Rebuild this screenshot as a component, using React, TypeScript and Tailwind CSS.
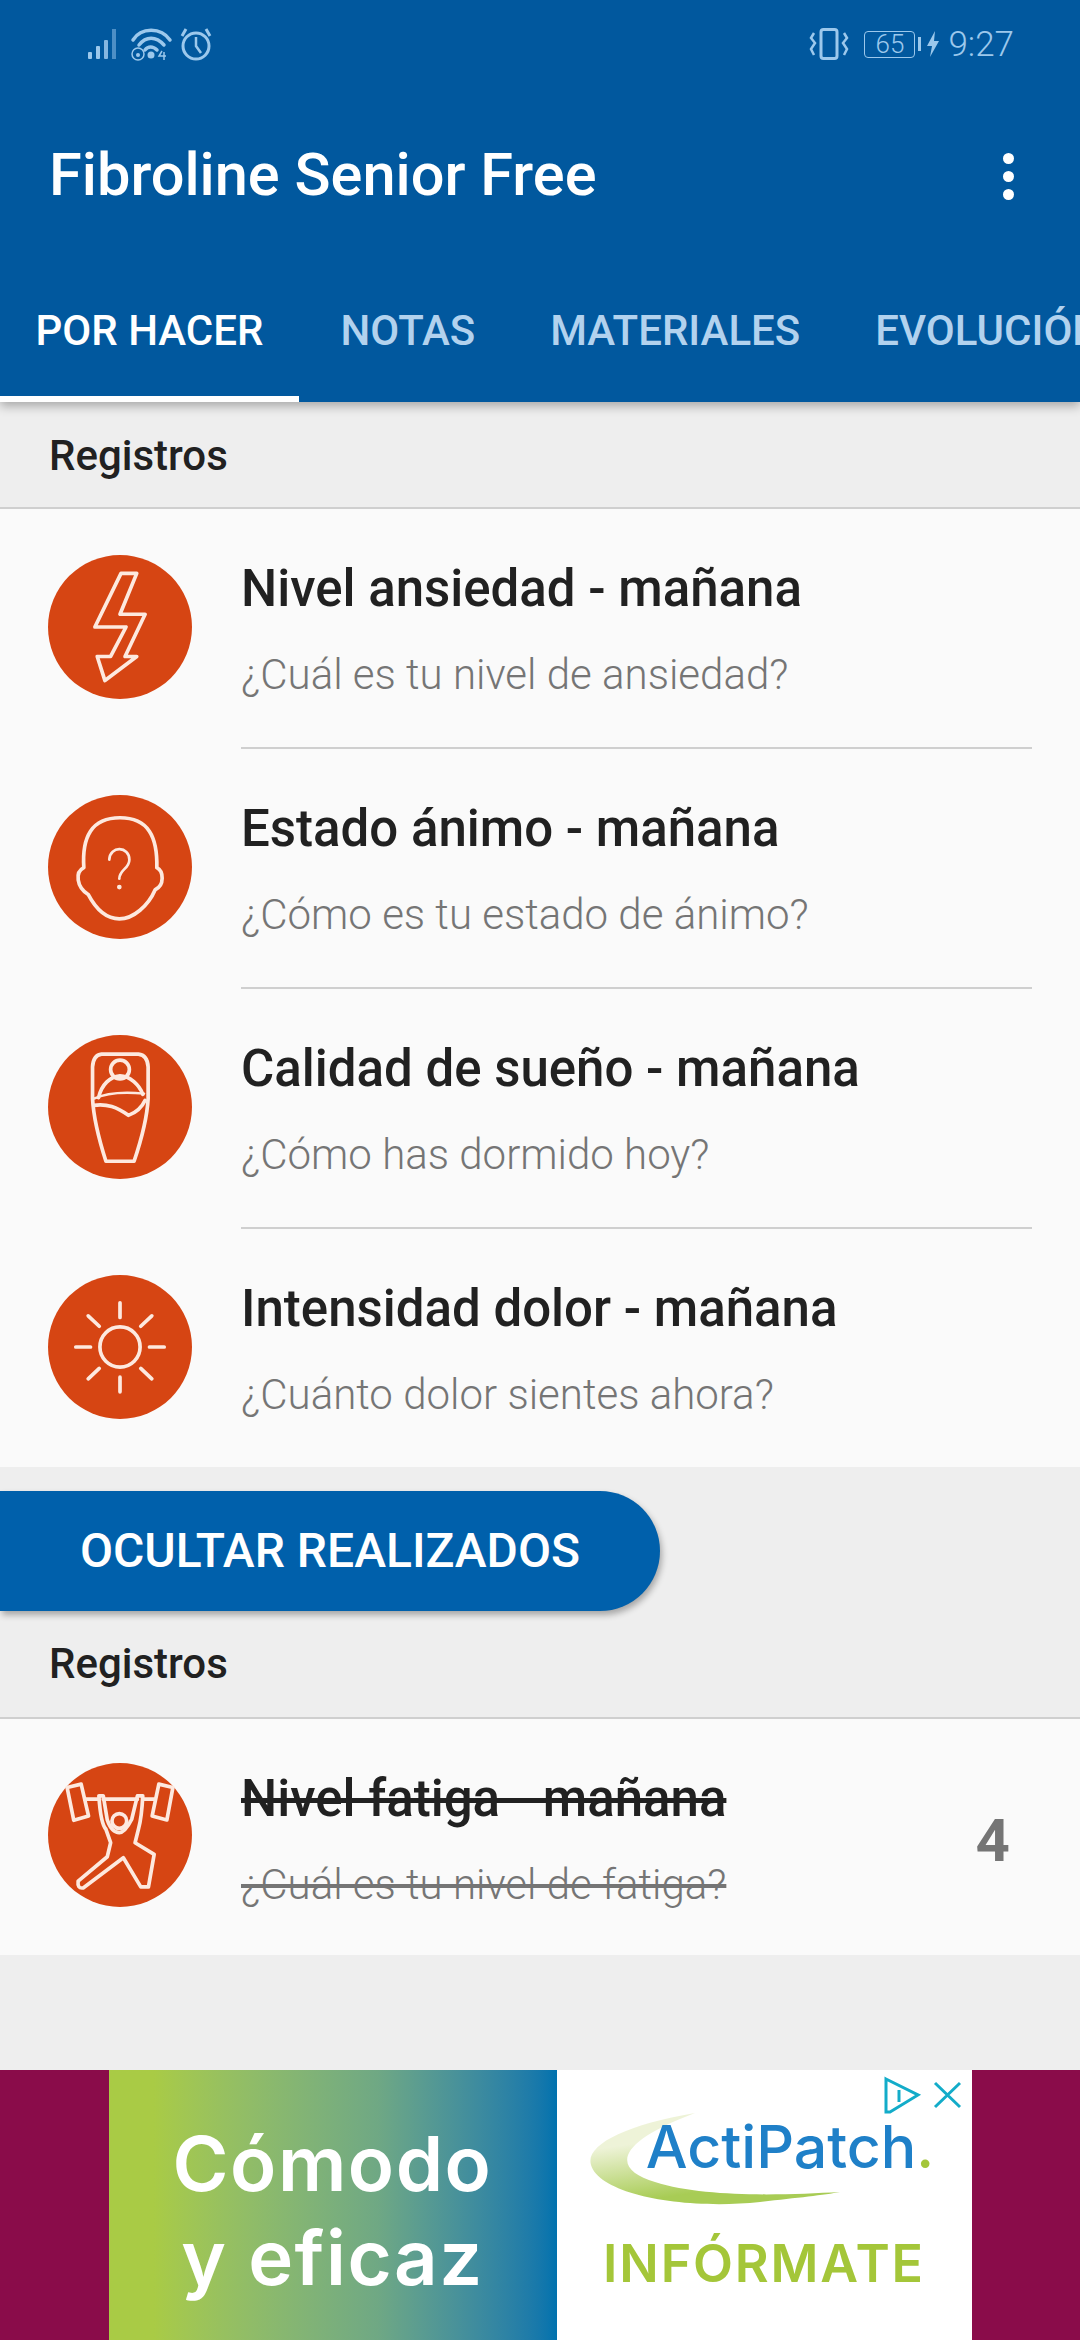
import type { ReactNode } from "react";

const statusColor = "#9cc8ec";

function SignalWifiAlarm() {
  return (
    <svg width="130" height="36" viewBox="0 0 130 36" fill="none" className="ml-[86px]">
      {/* signal bars */}
      <rect x="2" y="26" width="4" height="7" rx="1" fill={statusColor} />
      <rect x="10" y="20" width="4" height="13" rx="1" fill={statusColor} />
      <rect x="18" y="14" width="4" height="19" rx="1" fill={statusColor} opacity="0.85" />
      <rect x="26" y="3" width="4" height="30" fill="#4d8fc6" />
      {/* wifi */}
      <g stroke={statusColor} strokeWidth="3.5" strokeLinecap="round">
        <path d="M47 14 C55 1 75 1 84 14" />
        <path d="M53 19 C60 10 70 10 78 19" />
        <path d="M59 24 C62 20 67 20 71 24" />
      </g>
      <circle cx="52" cy="28" r="6" stroke={statusColor} strokeWidth="1.5" />
      <circle cx="52" cy="29" r="2" fill={statusColor} />
      <circle cx="65" cy="29" r="3.5" fill={statusColor} />
      <path d="M76 25 L73 30 H80 M78 26 V34" stroke={statusColor} strokeWidth="1.5" />
      {/* alarm */}
      <circle cx="110" cy="20" r="13" stroke={statusColor} strokeWidth="3" />
      <path d="M110 11 V20 L115 27" stroke={statusColor} strokeWidth="2.5" />
      <path d="M96 10 L100 3 M124 10 L120 3" stroke={statusColor} strokeWidth="3" />
    </svg>
  );
}

function VibrateIcon() {
  return (
    <svg width="42" height="32" viewBox="0 0 42 32" fill="none" stroke={statusColor}>
      <rect x="13" y="1.5" width="16" height="29" rx="2.5" strokeWidth="3" />
      <path d="M6 5 L3 10 L7 15 L3 21 L6 27" strokeWidth="2.5" />
      <path d="M36 5 L39 10 L35 15 L39 21 L36 27" strokeWidth="2.5" />
    </svg>
  );
}

function StatusBar() {
  return (
    <div className="flex h-[88px] items-center justify-between pr-[66px]">
      <SignalWifiAlarm />
      <div className="flex items-center">
        <VibrateIcon />
        <div className="ml-[14px] flex h-[27px] w-[51px] items-center justify-center rounded-[4px] border border-[#9cc8ec] text-[26px] font-light text-[#9cc8ec]">
          65
        </div>
        <div className="ml-[3px] h-[14px] w-[3px] bg-[#9cc8ec]" />
        <svg width="12" height="26" viewBox="0 0 12 26" className="ml-[6px]" fill={statusColor}>
          <path d="M8 0 L0 15 H5 L3 26 L12 10 H7 Z" />
        </svg>
        <span className="ml-[9px] text-[35px] font-light leading-none text-[#9cc8ec]">9:27</span>
      </div>
    </div>
  );
}

function Header() {
  const tabs = ["NOTAS", "MATERIALES", "EVOLUCIÓN"];
  return (
    <header className="relative z-10 h-[402px] shrink-0 bg-[#01589e] shadow-[0_4px_10px_rgba(0,0,0,0.3)]">
      <StatusBar />
      <div className="flex h-[176px] items-center justify-between pl-[49px] pr-[66px]">
        <h1 className="text-[59.5px] font-medium leading-none text-white">Fibroline Senior Free</h1>
        <div className="flex flex-col gap-[7px]">
          <span className="h-[11px] w-[11px] rounded-full bg-white" />
          <span className="h-[11px] w-[11px] rounded-full bg-white" />
          <span className="h-[11px] w-[11px] rounded-full bg-white" />
        </div>
      </div>
      <nav className="flex h-[138px] overflow-hidden pt-[44px]">
        <div className="flex w-[299px] shrink-0 flex-col items-center justify-between">
          <span className="text-[42px] font-medium leading-[46px] text-white">POR HACER</span>
          <span className="h-[6px] w-full bg-white" />
        </div>
        <div className="flex shrink-0 pl-[4px]">
          {tabs.map((t) => (
            <span key={t} className="shrink-0 px-[37.5px] text-[42px] font-medium leading-[46px] text-[#b2d2ee]">
              {t}
            </span>
          ))}
        </div>
      </nav>
    </header>
  );
}

function SectionTitle() {
  return <div className="text-[42px] font-medium leading-[48px] text-[#212121]">Registros</div>;
}

function IconCircle({ viewBox, children }: { viewBox: string; children: ReactNode }) {
  const [x, y, w, h] = viewBox.split(" ").map(Number);
  return (
    <svg width="144" height="144" viewBox={viewBox} fill="none" stroke="#fde9df" strokeWidth="11" strokeLinejoin="round" strokeLinecap="round" className="mb-[4px] shrink-0 overflow-visible">
      <circle cx={x + w / 2} cy={y + h / 2} r="215" fill="#d64513" stroke="none" />
      {children}
    </svg>
  );
}

const BoltIcon = (
  <IconCircle viewBox="85 75 430 430">
    <path d="M303 130 H350 L300 252 H375 L315 378 H350 L255 450 L232 378 H272 L318 290 H225 Z" />
  </IconCircle>
);

const HeadIcon = (
  <IconCircle viewBox="85 75 430 430">
    <path d="M192 292 C186 200 215 143 300 143 C385 143 412 200 410 292 C430 302 434 345 405 358 C385 405 340 445 298 445 C255 445 225 410 205 372 C170 350 165 305 192 292 Z" />
    <path d="M268 268 C270 225 328 228 328 268 C328 295 298 298 298 325" strokeWidth="8" />
    <circle cx="298" cy="350" r="5" fill="#fde9df" strokeWidth="4" />
  </IconCircle>
);

const BagIcon = (
  <IconCircle viewBox="85 75 430 430">
    <path d="M245 132 H355 Q382 135 384 170 V265 Q380 340 342 452 H258 Q222 340 218 265 V170 Q220 135 245 132 Z" />
    <circle cx="300" cy="178" r="28" />
    <path d="M236 262 C245 222 270 200 300 197 C330 197 358 225 368 252" />
    <path d="M222 265 C265 245 320 245 372 250" strokeWidth="7" />
    <path d="M222 285 C262 280 290 290 325 315 C345 308 365 292 375 270" />
  </IconCircle>
);

const SunIcon = (
  <IconCircle viewBox="85 795 430 430">
    <circle cx="300" cy="1010" r="60" />
    <path d="M300 878 V922 M300 1100 V1144 M168 1010 H212 M388 1010 H432 M205 917 L238 948 M395 917 L362 948 M205 1105 L238 1074 M395 1105 L362 1074" />
  </IconCircle>
);

const LifterIcon = (
  <IconCircle viewBox="85 42 430 430">
    <path d="M142 115 L184 105 L206 200 L162 213 Z" />
    <path d="M416 105 L458 115 L440 212 L396 200 Z" />
    <path d="M196 150 H236 M250 150 H352 M368 150 H402" />
    <circle cx="298" cy="215" r="22" />
    <path d="M237 140 C240 190 245 225 258 240 L272 280 L262 322 L175 395 Q172 418 190 415 L310 325 L362 412 H385 L402 315 L345 280 L355 240 C362 215 366 180 368 140 H352 L335 210 Q315 250 298 250 Q275 250 262 212 L250 140 Z" />
  </IconCircle>
);

function Row({
  icon,
  title,
  subtitle,
  done,
  value,
  divider,
}: {
  icon: ReactNode;
  title: string;
  subtitle: string;
  done?: boolean;
  value?: string;
  divider?: boolean;
}) {
  return (
    <div className={`flex items-center pl-[48px] ${done ? "h-[236px]" : "h-[240px]"}`}>
      {icon}
      <div className={`ml-[49px] mr-[48px] flex h-full flex-1 items-center ${divider ? "border-b-2 border-[#cfcfcf]" : ""}`}>
        <div className="flex-1 self-start pt-[52px]">
          <div className={`text-[51px] font-medium leading-[56px] text-[#212121] ${done ? "line-through" : ""}`}>{title}</div>
          <div className={`mt-[34px] text-[42px] font-light leading-[48px] text-[#757575] ${done ? "line-through" : ""}`}>{subtitle}</div>
        </div>
        {value && <span className="mr-[22px] mt-[8px] text-[60px] font-bold text-[#757575]">{value}</span>}
      </div>
    </div>
  );
}

function AdBanner() {
  return (
    <div className="mt-auto flex h-[270px] shrink-0 justify-center bg-[#8a0c4a]">
      <div className="flex w-[448px] flex-col items-center bg-gradient-to-r from-[#a9cb45] from-10% via-[#6fa884] via-60% to-[#0072ae] pt-[46px] font-['Inter',sans-serif] text-[76px] font-semibold leading-[94px] tracking-[0.02em] text-white">
        <span>Cómodo</span>
        <span>y eficaz</span>
      </div>
      <div className="relative flex w-[415px] flex-col items-center bg-white font-['Inter',sans-serif]">
        {/* ad choices */}
        <svg className="absolute right-[8px] top-[6px]" width="84" height="40" viewBox="0 0 84 40" fill="none" stroke="#13acc9" strokeWidth="3">
          <path d="M6 3 L38 19 L10 36 L6 36 Z" />
          <path d="M19 14 V26" strokeWidth="3" />
          <path d="M55 7 L80 31 M80 7 L55 31" />
        </svg>
        <svg className="absolute left-[28px] top-[40px]" width="270" height="100" viewBox="0 0 270 100" fill="none">
          <defs>
            <linearGradient id="swoosh" x1="0" y1="0" x2="0.4" y2="1">
              <stop offset="0.35" stopColor="#eef3d8" />
              <stop offset="0.9" stopColor="#a8cc55" />
            </linearGradient>
          </defs>
          <path d="M110 3 C40 15 0 35 6 55 C15 85 100 100 175 92 C210 88 240 85 255 82 C200 85 120 88 70 72 C30 60 25 35 110 3 Z" fill="url(#swoosh)" />
        </svg>
        <span className="relative ml-[52px] mt-[47px] text-[59px] font-medium leading-[60px] text-[#1f80c8]">
          ActiPatch<span className="text-[#a4c639]">.</span>
        </span>
        <span className="mt-[59px] text-[52px] font-semibold leading-[56px] tracking-[0.035em] text-[#a4c639]">INFÓRMATE</span>
      </div>
    </div>
  );
}

export default function App() {
  return (
    <div className="flex h-[2340px] w-[1080px] flex-col overflow-hidden bg-[#eeeeee] font-['Roboto',sans-serif]">
      <Header />
      <div className="flex h-[107px] shrink-0 items-center border-b-2 border-[#cfcfcf] pl-[49px] pt-[2px]">
        <SectionTitle />
      </div>
      <div className="h-[958px] shrink-0 overflow-hidden bg-[#fafafa]">
        <Row icon={BoltIcon} title="Nivel ansiedad - mañana" subtitle="¿Cuál es tu nivel de ansiedad?" divider />
        <Row icon={HeadIcon} title="Estado ánimo - mañana" subtitle="¿Cómo es tu estado de ánimo?" divider />
        <Row icon={BagIcon} title="Calidad de sueño - mañana" subtitle="¿Cómo has dormido hoy?" divider />
        <Row icon={SunIcon} title="Intensidad dolor - mañana" subtitle="¿Cuánto dolor sientes ahora?" />
      </div>
      <button className="mt-[24px] flex h-[120px] w-[660px] shrink-0 items-center justify-center rounded-r-[60px] bg-[#0060ab] text-[48px] font-medium text-white shadow-[2px_4px_6px_rgba(0,0,0,0.3)]">
        OCULTAR REALIZADOS
      </button>
      <div className="flex h-[108px] shrink-0 items-center border-b-2 border-[#cfcfcf] pl-[49px]">
        <SectionTitle />
      </div>
      <div className="shrink-0 bg-[#fafafa]">
        <Row icon={LifterIcon} title="Nivel fatiga - mañana" subtitle="¿Cuál es tu nivel de fatiga?" done value="4" />
      </div>
      <AdBanner />
    </div>
  );
}
